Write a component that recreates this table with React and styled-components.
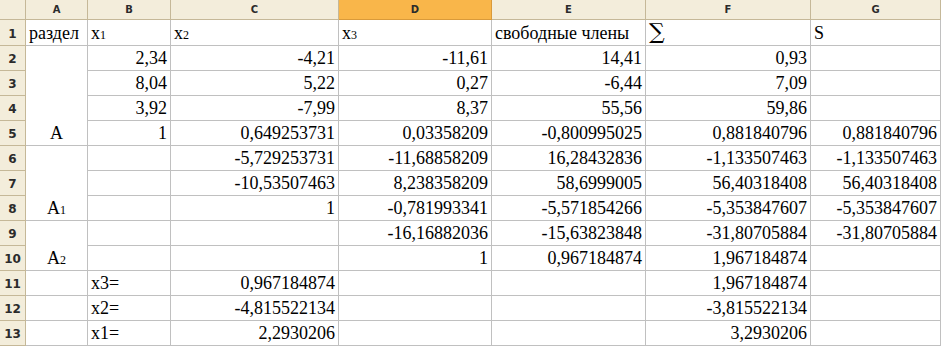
import React from "react";
import styled, { createGlobalStyle } from "styled-components";

const GlobalStyle = createGlobalStyle`
  html, body {
    margin: 0;
    padding: 0;
    background: #ffffff;
  }
  * {
    box-sizing: border-box;
  }
`;

const columns = ["A", "B", "C", "D", "E", "F", "G"];

// [text, kind] ; kind: "n" number (right), "t" text (left)
const rows = [
  [null, [["x", "1"], "t"], [["x", "2"], "t"], [["x", "3"], "t"], ["свободные члены", "t"], ["∑", "sigma"], ["S", "t"]],
  [null, ["2,34"], ["-4,21"], ["-11,61"], ["14,41"], ["0,93"], [""]],
  [null, ["8,04"], ["5,22"], ["0,27"], ["-6,44"], ["7,09"], [""]],
  [null, ["3,92"], ["-7,99"], ["8,37"], ["55,56"], ["59,86"], [""]],
  [null, ["1"], ["0,649253731"], ["0,03358209"], ["-0,800995025"], ["0,881840796"], ["0,881840796"]],
  [null, [""], ["-5,729253731"], ["-11,68858209"], ["16,28432836"], ["-1,133507463"], ["-1,133507463"]],
  [null, [""], ["-10,53507463"], ["8,238358209"], ["58,6999005"], ["56,40318408"], ["56,40318408"]],
  [null, [""], ["1"], ["-0,781993341"], ["-5,571854266"], ["-5,353847607"], ["-5,353847607"]],
  [null, [""], [""], ["-16,16882036"], ["-15,63823848"], ["-31,80705884"], ["-31,80705884"]],
  [null, [""], [""], ["1"], ["0,967184874"], ["1,967184874"], [""]],
  [null, ["x3=", "t"], ["0,967184874"], [""], [""], ["1,967184874"], [""]],
  [null, ["x2=", "t"], ["-4,815522134"], [""], [""], ["-3,815522134"], [""]],
  [null, ["x1=", "t"], ["2,2930206"], [""], [""], ["3,2930206"], [""]],
];

// column A: merged blocks
const sections = [
  { row: 1, span: 1, label: "раздел", align: "left" },
  { row: 2, span: 4, label: ["A", ""] },
  { row: 6, span: 3, label: ["A", "1"] },
  { row: 9, span: 2, label: ["A", "2"] },
  { row: 11, span: 1, label: null },
  { row: 12, span: 1, label: null },
  { row: 13, span: 1, label: null },
];

function Sheet() {
  return (
    <Grid>
      <Corner />
      {columns.map((c, i) => (
        <ColHead key={c} $active={c === "D"} style={{ gridColumn: i + 2 }}>
          {c}
        </ColHead>
      ))}

      {rows.map((_, r) => (
        <RowHead key={"rh" + r} style={{ gridRow: r + 2 }}>
          {r + 1}
        </RowHead>
      ))}

      {sections.map((s) => (
        <Cell
          key={"a" + s.row}
          $align={s.align === "left" ? "left" : "center"}
          style={{ gridColumn: 2, gridRow: `${s.row + 1} / span ${s.span}` }}
        >
          {Array.isArray(s.label) ? (
            <span>
              {s.label[0]}
              <Sub>{s.label[1]}</Sub>
            </span>
          ) : (
            s.label
          )}
        </Cell>
      ))}

      {rows.map((row, r) =>
        row.slice(1).map(([value, kind], c) => (
          <Cell
            key={r + "-" + c}
            $align={kind ? "left" : "right"}
            style={{ gridColumn: c + 3, gridRow: r + 2 }}
          >
            {Array.isArray(value) ? (
              <span>
                {value[0]}
                <Sub>{value[1]}</Sub>
              </span>
            ) : kind === "sigma" ? (
              <Sigma>{value}</Sigma>
            ) : (
              value
            )}
          </Cell>
        ))
      )}
    </Grid>
  );
}

export default function App() {
  return (
    <>
      <GlobalStyle />
      <Sheet />
    </>
  );
}

const Grid = styled.div`
  display: grid;
  grid-template-columns: 26px 62px 83px 168px 153px 154px 165px 130px;
  grid-template-rows: 20px 26px repeat(12, 25px);
  width: 941px;
  height: 347px;
  overflow: hidden;
  background: #ffffff;
`;

const Corner = styled.div`
  grid-column: 1;
  grid-row: 1;
  background: #f3eddb;
  border-right: 1px solid #c5b898;
  border-bottom: 1px solid #c5b898;
`;

const ColHead = styled.div`
  grid-row: 1;
  display: flex;
  align-items: center;
  justify-content: center;
  background: ${(p) => (p.$active ? "#f9b64a" : "#f3eddb")};
  border-right: 1px solid ${(p) => (p.$active ? "#d99a3a" : "#c5b898")};
  border-bottom: 1px solid ${(p) => (p.$active ? "#d99a3a" : "#c5b898")};
  font-family: "DejaVu Sans", "Liberation Sans", sans-serif;
  font-weight: bold;
  font-size: 10px;
  color: #2b2b2b;
`;

const RowHead = styled.div`
  grid-column: 1;
  display: flex;
  align-items: center;
  justify-content: center;
  padding-top: 2px;
  background: #f3eddb;
  border-right: 1px solid #c5b898;
  border-bottom: 1px solid #c5b898;
  font-family: "DejaVu Sans", "Liberation Sans", sans-serif;
  font-weight: bold;
  font-size: 12px;
  color: #2b2b2b;
`;

const Cell = styled.div`
  display: flex;
  align-items: flex-end;
  justify-content: ${(p) =>
    p.$align === "right" ? "flex-end" : p.$align === "center" ? "center" : "flex-start"};
  padding: 0 3px 2px 3px;
  border-right: 1px solid #c0c0c0;
  border-bottom: 1px solid #c0c0c0;
  font-family: "Liberation Serif", "Times New Roman", serif;
  font-size: 18px;
  line-height: 20px;
  color: #000000;
  white-space: nowrap;
  overflow: hidden;
`;

const Sub = styled.span`
  font-size: 12px;
  line-height: 1;
`;

const Sigma = styled.span`
  font-family: "DejaVu Serif", "Liberation Serif", serif;
  font-size: 22px;
  line-height: 22px;
`;
